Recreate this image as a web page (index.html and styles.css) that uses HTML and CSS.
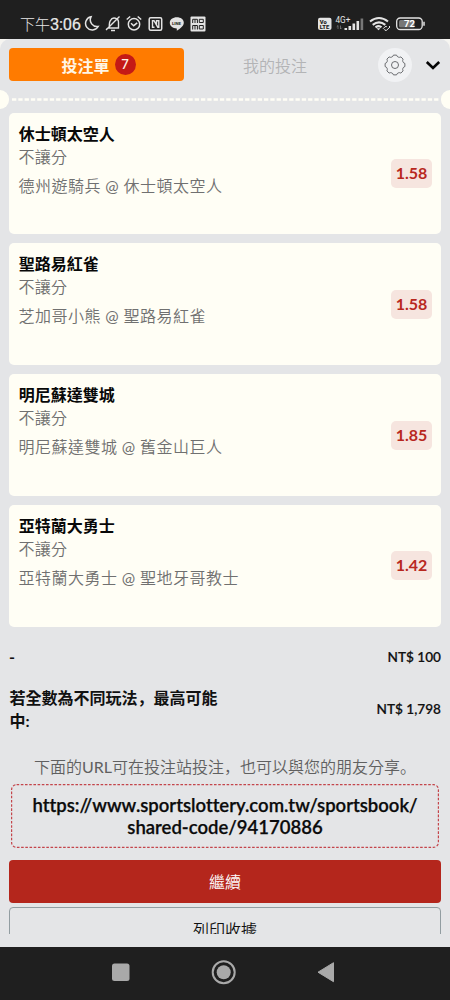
FILE: index.html
```html
<!DOCTYPE html>
<html lang="zh-Hant">
<head>
<meta charset="utf-8">
<title>投注單</title>
<link rel="stylesheet" href="styles.css">
</head>
<body>
<div class="phone">
  <div class="status">
    <span class="clock">下午<b>3:06</b></span>
    <svg class="status-left" width="124" height="20" viewBox="0 0 124 20" fill="none" stroke="#e4e4e4" stroke-width="1.5">
      <path d="M7 2.800A6.700 6.700 0 1 0 14.200 12.500A6.800 6.800 0 0 1 7 2.800Z"/>
      <path d="M24 14h10.500v-5.500a4.200 4.200 0 0 0-8-2q-1.300 1.500-1.200 6.500zM22 16L35.500 2.500M27 16.500h4" stroke-width="1.400"/>
      <circle cx="50" cy="10.200" r="5.700"/><path d="M47 9.200l2.700 2.500 3.500-2.800M42.700 5.500l3.500-3M53.700 2.500l3.500 3"/>
      <rect x="65.200" y="3.700" width="12.500" height="12.500" rx="1.500"/><path d="M70.500 13.200h-2V6.700h1.500l3.800 6.500h1V6.700H72.500V11" stroke-width="1.400"/>
      <path d="M92.800 3.300c4 0 7 2.200 7 5.500 0 3.500-4 6-7 8v-2.300c-4-.2-7-2.500-7-5.700S88.800 3.300 92.800 3.300Z" fill="#e4e4e4" stroke="none"/>
      <text x="87.900" y="10.500" class="line-label">LINE</text>
      <rect x="106.500" y="2.500" width="15" height="15" rx="1" fill="#e4e4e4" stroke="none"/>
      <path d="M108.700 9V5.300h4.700V9M111 5.500V9M115.300 5.300h4V8.500h-4zM108.700 15.500v-4h4.700v4M111 11.500v4M115.300 11.500h4v3.500h-4z" stroke="#222" stroke-width="1"/>
    </svg>
    <svg class="status-right" width="114" height="20" viewBox="0 0 114 20">
      <rect x="2" y="3.700" width="13.500" height="12.300" rx="2" fill="#e4e4e4"/>
      <text x="3.700" y="9.600" class="volte">Vo</text><text x="3.700" y="15" class="volte">LTE</text>
      <text x="19.500" y="8.800" class="net">4G+</text>
      <path d="M22 15v-3.500M20.700 12.800l1.300-1.300M24.500 11.500v3.500M25.800 13.700L24.500 15" stroke="#999" stroke-width=".6" fill="none"/>
      <path d="M28.500 14h2.600v2h-2.600zM32.500 12h2.600v4h-2.600zM36.500 9.500h2.600V16h-2.600zM40.500 7h2.600v9h-2.600z" fill="#e4e4e4"/><path d="M44.600 4.500h2.600V16h-2.600z" fill="#777"/>
      <g fill="none" stroke="#e4e4e4" stroke-width="2.100"><path d="M54 7.500q9-7 18 0M56.700 10.800q6.300-4.800 12.600 0M59.500 13.300q3.500-2.400 6 0"/><path d="M67 14.800l2-2q1.300-1 2 .2M73 12l1 1-3.500 3.300q-2 .5-2-1" stroke-width="1"/></g>
      <path d="M60.500 14.300l2 2 2-2z" fill="#e4e4e4"/>
      <rect x="80.700" y="4" width="25.500" height="11.500" rx="3.500" fill="none" stroke="#e4e4e4" stroke-width="1.300"/>
      <rect x="83" y="6" width="15.500" height="7.500" rx="1.500" fill="#777"/>
      <path d="M108 7.800v4" stroke="#e4e4e4" stroke-width="1.500"/>
      <text x="88" y="13.300" class="charge">72</text>
    </svg>
  </div>
  <div class="sheet-back">
  <div class="sheet">
    <div class="head">
      <div class="tab active">投注單<span class="count">7</span></div>
      <div class="tab idle">我的投注</div>
      <div class="gear">
        <svg width="24" height="24" viewBox="-12 -12 24 24" fill="none" stroke="#5b5e61" stroke-width=".9"><path d="M-1.560-9.880H1.560A2.900 2.900 0 0 0 5.880-8.090L8.090-5.880A2.900 2.900 0 0 0 9.880-1.560V1.560A2.900 2.900 0 0 0 8.090 5.880L5.880 8.090A2.900 2.900 0 0 0 1.560 9.880H-1.560A2.900 2.900 0 0 0-5.880 8.090L-8.090 5.880A2.900 2.900 0 0 0-9.880 1.560V-1.560A2.900 2.900 0 0 0-8.090-5.880L-5.880-8.090A2.900 2.900 0 0 0-1.560-9.880Z"/><circle r="3.500"/></svg>
      </div>
      <svg class="chevron" width="16" height="12" viewBox="0 0 16 12" fill="none" stroke="#050505" stroke-width="2.600"><path d="M1.800 3l6.200 6 6.200-6"/></svg>
    </div>
    <div class="tear"><i class="notch"></i><svg class="perforation" height="3" width="432"><path d="M3 1.500H430" stroke="#fffef6" stroke-width="2.400" stroke-dasharray="4.300 2"/></svg><i class="notch"></i></div>
    <div class="cards">
      <div class="card"><div><div class="team">休士頓太空人</div><div class="kind">不讓分</div><div class="match">德州遊騎兵<span class="latin"> @ </span>休士頓太空人</div></div><span class="odds">1.58</span></div>
      <div class="card"><div><div class="team">聖路易紅雀</div><div class="kind">不讓分</div><div class="match">芝加哥小熊<span class="latin"> @ </span>聖路易紅雀</div></div><span class="odds">1.58</span></div>
      <div class="card"><div><div class="team">明尼蘇達雙城</div><div class="kind">不讓分</div><div class="match">明尼蘇達雙城<span class="latin"> @ </span>舊金山巨人</div></div><span class="odds">1.85</span></div>
      <div class="card"><div><div class="team">亞特蘭大勇士</div><div class="kind">不讓分</div><div class="match">亞特蘭大勇士<span class="latin"> @ </span>聖地牙哥教士</div></div><span class="odds">1.42</span></div>
    </div>
    <div class="sum first"><span>-</span><span class="money">NT$ 100</span></div>
    <div class="sum second"><span class="label">若全數為不同玩法<span class="punct" lang="zh-Hans">，</span>最高可能中:</span><span class="money">NT$ 1,798</span></div>
    <div class="hint">下面的<span class="latin">URL</span>可在投注站投注<span class="punct" lang="zh-Hans">，</span>也可以與您的朋友分享<span class="punct" lang="zh-Hans">。</span></div>
    <div class="share"><svg class="share-border" width="428" height="64" fill="none"><rect x=".6" y=".6" width="426.800" height="62.800" rx="5" stroke="#c4454b" stroke-width="1.200" stroke-dasharray="2.600 1.600"/></svg><span class="url">https://www.sportslottery.com.tw/sportsbook/<br>shared-code/94170886</span></div>
    <div class="button primary">繼續</div>
    <div class="clip"><div class="button outline">列印收據</div></div>
  </div>
  </div>
  <div class="nav">
    <svg width="450" height="54" viewBox="0 0 450 54"><rect x="112" y="16.500" width="17.500" height="17.500" rx="2.500" fill="#a9a9a9"/><circle cx="223.700" cy="25.200" r="11" fill="none" stroke="#a9a9a9" stroke-width="2"/><circle cx="223.700" cy="25.200" r="7" fill="#a9a9a9"/><path d="M318 25.200L333.500 15.700V34.700Z" fill="#a9a9a9" stroke="#a9a9a9" stroke-width="1" stroke-linejoin="round"/></svg>
  </div>
</div>
</body>
</html>
```
FILE: styles.css
```css
* { box-sizing: border-box; }
body { margin: 0; font-family: Lato, "Noto Sans CJK TC", sans-serif; background: #1f1f1f; }
.phone { width: 450px; height: 1000px; display: flex; flex-direction: column; overflow: hidden; }
.status { height: 39px; flex: none; background: #1f1f1f; display: flex; align-items: flex-start; padding: 14px 20px 0 20px; }
.clock { width: 63.500px; font: 300 15px/20px "Noto Sans CJK TC", sans-serif; color: #e8e8e8; white-space: nowrap; }
.clock b { font: 400 16.500px/20px Roboto, sans-serif; letter-spacing: -.3px; -webkit-text-stroke: .2px #e8e8e8; }
.status-left { flex: none; }
.status-right { flex: none; margin-left: auto; }
.line-label { font: 700 4.300px Roboto, sans-serif; fill: #222; stroke: none; }
.volte { font: 900 5.800px Roboto, sans-serif; fill: #222; }
.net { font: 400 8.200px Roboto, sans-serif; fill: #e4e4e4; }
.charge { font: 700 9.500px Roboto, sans-serif; fill: #fff; }
.sheet-back { height: 907.500px; flex: none; background: #f6f5f1; }
.sheet { height: 100%; background: #e4e5e7; border-radius: 10px 10px 0 0; padding-top: 9px; display: flex; flex-direction: column; }
.head { height: 33px; margin: 0 9px; display: flex; align-items: center; flex: none; }
.tab { width: 175px; height: 33px; display: flex; align-items: center; justify-content: center; font-size: 16px; }
.active { background: #ff7b00; color: #fff6e6; border-radius: 4px; font-weight: 700; gap: 5px; padding-left: 4px; }
.count { width: 21px; height: 21px; border-radius: 50%; background: #c41a16; font-size: 13px; line-height: 21px; text-align: center; font-weight: 600; }
.idle { width: 182px; color: #b3b4b6; font-weight: 350; }
.gear { width: 34px; height: 34px; border-radius: 50%; background: #f1f2f4; display: flex; align-items: center; justify-content: center; margin-left: 12px; }
.chevron { margin-left: 13px; }
.tear { height: 20px; margin-top: 8px; display: flex; justify-content: space-between; align-items: center; flex: none; }
.notch { width: 9px; height: 19px; flex: none; background: #fffef4; border-radius: 0 10px 10px 0; }
.notch:last-child { border-radius: 10px 0 0 10px; }
.perforation { flex: none; }
.cards { display: flex; flex-direction: column; gap: 9.300px; margin: 3.700px 9px 0; flex: none; }
.card { height: 121.500px; border-radius: 5px; background: #fffef5; display: flex; justify-content: space-between; align-items: center; padding: 0 9px; }
.card > div { align-self: flex-start; padding-top: 9px; }
.team { font-size: 16px; line-height: 24px; font-weight: 700; color: #080808; padding-left: .7px; }
.kind { font-size: 16px; line-height: 22px; font-weight: 350; color: #707070; letter-spacing: .3px; padding-left: .4px; }
.match { font-size: 16px; line-height: 24px; margin-top: 6px; font-weight: 350; color: #707070; letter-spacing: .5px; padding-left: .4px; }
.latin { font-weight: 400; }
.match .latin { letter-spacing: .3px; }
.odds { width: 41px; height: 29px; border-radius: 5px; background: #f6e5df; color: #b8281e; font-size: 16px; line-height: 28px; font-weight: 700; text-align: center; }
.sum { margin: 0 9px; display: flex; justify-content: space-between; align-items: center; font-weight: 700; color: #111; flex: none; }
.first { height: 58px; padding-top: 1px; font-size: 16px; }
.second { height: 48px; }
.label { width: 220px; font-size: 16px; line-height: 23px; padding-left: .5px; }
.money { font-size: 13.600px; font-weight: 600; padding-top: 1px; -webkit-text-stroke: .15px #111; }
.punct { font-family: "Noto Sans CJK SC", sans-serif; line-height: 1; }
.hint { height: 24px; margin-top: 22px; text-align: center; font-size: 16px; line-height: 24px; font-weight: 350; color: #606060; white-space: nowrap; flex: none; }
.share { height: 64px; width: 428px; margin: 5px 0 0 11px; display: grid; flex: none; }
.share > * { grid-area: 1 / 1; }
.url { align-self: center; text-align: center; font-size: 18.500px; line-height: 22px; font-weight: 600; color: #0b0b0b; font-variant-ligatures: none; -webkit-text-stroke: .25px #0b0b0b; }
.button { border-radius: 4px; height: 43.500px; display: flex; align-items: center; justify-content: center; font-size: 16px; flex: none; }
.primary { margin: 12px 9px 0; background: #b4261c; color: #fff; font-weight: 350; }
.clip { height: 27px; margin: 4px 9px 0; overflow: hidden; flex: none; }
.outline { border: 1px solid #929da1; color: #111; font-weight: 350; }
.nav { flex: 1; background: #1f1f1f; }
.nav svg { display: block; }
```
